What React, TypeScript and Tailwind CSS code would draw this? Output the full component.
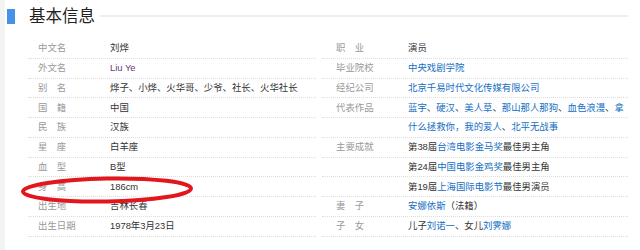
import React from "react";

type Part = string | { link: string };
type Row = { label: string; value: Part[]; color?: string };

const leftRows: Row[] = [
  { label: "中文名", value: ["刘烨"] },
  { label: "外文名", value: ["Liu Ye"], color: "text-[#6b3a7d]" },
  { label: "别　名", value: ["烨子、小烨、火华哥、少爷、社长、火华社长"] },
  { label: "国　籍", value: ["中国"] },
  { label: "民　族", value: ["汉族"] },
  { label: "星　座", value: ["白羊座"] },
  { label: "血　型", value: ["B型"] },
  { label: "身　高", value: ["186cm"] },
  { label: "出生地", value: ["吉林长春"] },
  { label: "出生日期", value: ["1978年3月23日"] },
];

const rightRows: Row[] = [
  { label: "职　业", value: ["演员"] },
  { label: "毕业院校", value: [{ link: "中央戏剧学院" }] },
  { label: "经纪公司", value: [{ link: "北京千易时代文化传媒有限公司" }] },
  {
    label: "代表作品",
    value: [
      { link: "蓝宇" }, "、", { link: "硬汉" }, "、", { link: "美人草" }, "、",
      { link: "那山那人那狗" }, "、", { link: "血色浪漫" }, "、", { link: "拿" },
    ],
  },
  { label: "", value: [{ link: "什么拯救你，我的爱人" }, "、", { link: "北平无战事" }] },
  { label: "主要成就", value: ["第38届", { link: "台湾电影金马奖" }, "最佳男主角"] },
  { label: "", value: ["第24届", { link: "中国电影金鸡奖" }, "最佳男主角"] },
  { label: "", value: ["第19届", { link: "上海国际电影节" }, "最佳男演员"] },
  { label: "妻　子", value: [{ link: "安娜依斯" }, "（法籍）"] },
  { label: "子　女", value: ["儿子", { link: "刘诺一" }, "、女儿", { link: "刘霁娜" }] },
];

function InfoRow({ row, pad }: { row: Row; pad: string }) {
  return (
    <div className={`flex items-center h-[19.75px] border-b border-dotted border-[#dcdcdc] ${pad}`}>
      <span className="w-[72px] shrink-0 text-[#999]">{row.label}</span>
      <span className={`whitespace-nowrap ${row.color ?? "text-[#333]"}`}>
        {row.value.map((p, i) =>
          typeof p === "string" ? (
            <span key={i}>{p}</span>
          ) : (
            <span key={i} className="text-[#136ec2]">{p.link}</span>
          )
        )}
      </span>
    </div>
  );
}

export default function App() {
  return (
    <div
      className="relative w-[640px] h-[250px] bg-white flex overflow-hidden text-[9.4px]"
      style={{ fontFamily: '"Liberation Sans", "Noto Sans CJK SC", sans-serif' }}
    >
      {/* left gutter */}
      <div className="w-[5px] shrink-0 bg-[#f3f3f3]" />

      <div className="flex-1 flex flex-col pl-[2px]">
        {/* Title */}
        <div className="flex items-center h-[16px] mt-[8px]">
          <div className="w-[8px] h-[15px] bg-[#4592e8]" />
          <h2 className="ml-[14px] text-[16.5px] leading-none text-[#222]">基本信息</h2>
          <div className="flex-1 ml-[5px] mr-[12px] h-[2px] bg-[#efefef]" />
        </div>

        {/* Tables */}
        <div className="flex mt-[15px]">
          <div className="ml-[21px] w-[288px]">
            {leftRows.map((r, i) => (
              <InfoRow key={i} row={r} pad="pl-[10px]" />
            ))}
          </div>
          <div className="ml-[6px] w-[306px]">
            {rightRows.map((r, i) => (
              <InfoRow key={i} row={r} pad="pl-[14px]" />
            ))}
          </div>
        </div>
      </div>

      {/* red hand-drawn mark */}
      <svg className="absolute left-[18px] top-[172px]" width="180" height="36" viewBox="0 0 180 36">
        <ellipse
          cx="89"
          cy="18"
          rx="84"
          ry="11.5"
          fill="none"
          stroke="#e2161c"
          strokeWidth="4"
          transform="rotate(-1 89 18)"
        />
      </svg>
    </div>
  );
}
